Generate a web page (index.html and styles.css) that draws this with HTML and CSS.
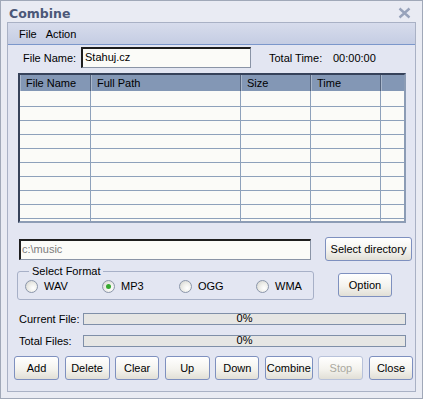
FILE: index.html
```html
<html>
<head>
<title>Combine</title>
<link rel="stylesheet" href="styles.css">
</head>
<body>

<!-- ====================================================== -->
<div class="window">

  <div class="titlebar">
    <span class="title">Combine</span>
    <svg class="close" width="13" height="12" viewBox="0 0 13 12">
      <path d="M1.5 1.5 L11.5 10.5 M11.5 1.5 L1.5 10.5" stroke="#98a3bb" stroke-width="2.4" fill="none"/>
    </svg>
  </div>

  <div class="client">

    <!-- menu -->
    <div class="menubar">
      <span class="menu-item">File</span>
      <span class="menu-item">Action</span>
    </div>

    <!-- file name / total time -->
    <div class="name-row">
      <span class="lbl-name">File Name:</span>
      <div class="textbox name-box">Stahuj.cz</div>
      <span class="lbl-time">Total Time:</span>
      <span class="time-val">00:00:00</span>
    </div>

    <!-- file list -->
    <div class="list">
      <div class="list-head">
        <div class="hcell">File Name</div>
        <div class="hcell">Full Path</div>
        <div class="hcell">Size</div>
        <div class="hcell">Time</div>
        <div class="hcell last"></div>
      </div>
      <div class="list-body">
        <div class="col"></div>
        <div class="col"></div>
        <div class="col"></div>
        <div class="col"></div>
        <div class="col last"></div>
      </div>
    </div>

    <!-- output directory -->
    <div class="dir-row">
      <div class="textbox dir-box">c:\music</div>
      <button class="btn btn-dir">Select directory</button>
    </div>

    <!-- format -->
    <div class="format-row">
      <fieldset class="group">
        <legend>Select Format</legend>
        <div class="radios">
          <div class="opt"><span class="radio"></span>WAV</div>
          <div class="opt"><span class="radio checked"></span>MP3</div>
          <div class="opt"><span class="radio"></span>OGG</div>
          <div class="opt"><span class="radio"></span>WMA</div>
        </div>
      </fieldset>
      <button class="btn btn-option">Option</button>
    </div>

    <!-- progress -->
    <div class="prog-row first">
      <span class="prog-lbl">Current File:</span>
      <div class="prog-bar">0%</div>
    </div>
    <div class="prog-row">
      <span class="prog-lbl">Total Files:</span>
      <div class="prog-bar">0%</div>
    </div>

    <!-- buttons -->
    <div class="btn-row">
      <button class="btn w45">Add</button>
      <button class="btn w45">Delete</button>
      <button class="btn w44">Clear</button>
      <button class="btn w45">Up</button>
      <button class="btn w44">Down</button>
      <button class="btn w48">Combine</button>
      <button class="btn w45" disabled>Stop</button>
      <button class="btn w44">Close</button>
    </div>

  </div>
</div>

</body>
</html>
```

FILE: styles.css
```css
/*-----------------------------------------------------------------*/
body {
    margin:             0;
    font-family:        "Liberation Sans", Arial, sans-serif;
    font-size:          11px;
    color:              #000;
    background:         #fff;
}

/*-----------------------------------------------------------------*/
.window {
    width:              423px;
    height:             399px;
    box-sizing:         border-box;
    border:             1px solid #a0a8b8;
    background:         #e9ebf3;
    padding:            0 6px 6px 6px;
    display:            flex;
    flex-direction:     column;
}

.titlebar {
    height:             21px;
    flex:               none;
    display:            flex;
    align-items:        center;
    justify-content:    space-between;
    padding:            0 5px 0 2px;
}

.title {
    font-family:        "DejaVu Sans", Verdana, sans-serif;
    font-weight:        bold;
    font-size:          12.5px;
    color:              #4b5778;
    margin-top:         3px;
}

.close {
    margin-top:         3px;
}

.client {
    flex:               1;
    border:             1px solid #a9b1c5;
    background:         #e3e6f2;
}

/*-----------------------------------------------------------------*/
.menubar {
    height:             21px;
    display:            flex;
    align-items:        center;
    gap:                9px;
    padding-left:       11px;
    background:         linear-gradient(#d7dcec, #c5cde3);
    border-bottom:      1px solid #7b97cb;
}

/*-----------------------------------------------------------------*/
.name-row {
    margin-top:         2px;
    height:             21px;
    display:            flex;
    align-items:        center;
}

.lbl-name {
    padding-left:       15px;
    width:              58px;
}

.textbox {
    box-sizing:         border-box;
    height:             21px;
    line-height:        17px;
    padding-left:       1px;
    border-style:       solid;
    border-width:       2px 1px 1px 2px;
    border-color:       #1e1e1e #8a94a6 #8a94a6 #1e1e1e;
    background:         #fbfbf8;
}

.name-box {
    width:              170px;
    padding-left:       2px;
}

.lbl-time {
    margin-left:        18px;
    width:              64px;
}

/*-----------------------------------------------------------------*/
.list {
    margin:             5px 0 0 10px;
    width:              388px;
    height:             150px;
    box-sizing:         border-box;
    border-style:       solid;
    border-width:       2px;
    border-color:       #36425a #8c9cb5 #8c9cb5 #36425a;
    display:            flex;
    flex-direction:     column;
}

.list-head, .list-body {
    display:            grid;
    grid-template-columns: 71px 150px 70px 70px 1fr;
}

.list-head {
    height:             16px;
    background:         #8397b5;
}

.hcell {
    border-right:       1px solid #52627c;
    box-shadow:         inset 1px 0 #a9b7cc;
    padding-left:       6px;
    line-height:        16px;
}

.hcell.last {
    border-right:       none;
}

.list-body {
    flex:               1;
    background:
        linear-gradient(#fbfbf8, #fbfbf8) 0 0 / 100% 2px no-repeat,
        repeating-linear-gradient(#fbfbf8 0 13px, #8ea1bb 13px 14px) 0 2px,
        #fbfbf8;
}

.col {
    border-right:       1px solid #8ea1bb;
}

.col.last {
    border-right:       none;
}

/*-----------------------------------------------------------------*/
.btn {
    box-sizing:         border-box;
    height:             24px;
    padding:            0;
    border:             1px solid #7e90bf;
    border-radius:      3px;
    background:         linear-gradient(#ffffff, #f4f3ee 55%, #e1dfd6);
    font-family:        "Liberation Sans", Arial, sans-serif;
    font-size:          11px;
    color:              #000;
}

.btn:disabled {
    color:              #aaa9a0;
    border-color:       #b8c2da;
}

/*-----------------------------------------------------------------*/
.dir-row {
    margin-top:         14px;
    height:             24px;
    display:            flex;
    align-items:        center;
}

.dir-box {
    margin-left:        11px;
    width:              292px;
    color:              #7c7c7c;
}

.btn-dir {
    margin-left:        14px;
    width:              87px;
}

/*-----------------------------------------------------------------*/
.format-row {
    margin-top:         4px;
    display:            flex;
    align-items:        flex-start;
}

.group {
    margin:             0 0 0 9px;
    width:              297px;
    box-sizing:         border-box;
    min-width:          0;
    padding:            0 0 5px 7px;
    border:             1px solid #a7b0c7;
    border-radius:      3px;
}

.group legend {
    padding:            0 3px;
    margin-left:        4px;
    line-height:        13px;
}

.radios {
    height:             16px;
    display:            flex;
    align-items:        center;
}

.opt {
    flex:               none;
    width:              77px;
    display:            flex;
    align-items:        center;
}

.radio {
    flex:               none;
    width:              13px;
    height:             13px;
    box-sizing:         border-box;
    border:             1px solid #8b96aa;
    border-radius:      50%;
    background:         radial-gradient(circle at 65% 65%, #ffffff 0, #eeeeea 45%, #cfcfca 100%);
    margin-right:       6px;
    position:           relative;
}

.radio.checked::after {
    content:            "";
    position:           absolute;
    left:               3px;
    top:                3px;
    width:              5px;
    height:             5px;
    border-radius:      50%;
    background:         #35a92f;
}

.btn-option {
    margin:             8px 0 0 24px;
    width:              54px;
}

/*-----------------------------------------------------------------*/
.prog-row {
    margin-top:         10px;
    height:             12px;
    display:            flex;
    align-items:        center;
}

.prog-row.first {
    margin-top:         13px;
}

.prog-lbl {
    padding-left:       11px;
    width:              64px;
}

.prog-bar {
    width:              323px;
    height:             12px;
    box-sizing:         border-box;
    border:             1px solid #7f8fa8;
    background:         #e6e6e4;
    text-align:         center;
    line-height:        9px;
}

/*-----------------------------------------------------------------*/
.btn-row {
    margin-top:         9px;
    display:            flex;
    justify-content:    space-between;
    padding:            0 2px 0 6px;
}

.w44 { width: 44px; }
.w45 { width: 45px; }
.w48 { width: 48px; }
```
